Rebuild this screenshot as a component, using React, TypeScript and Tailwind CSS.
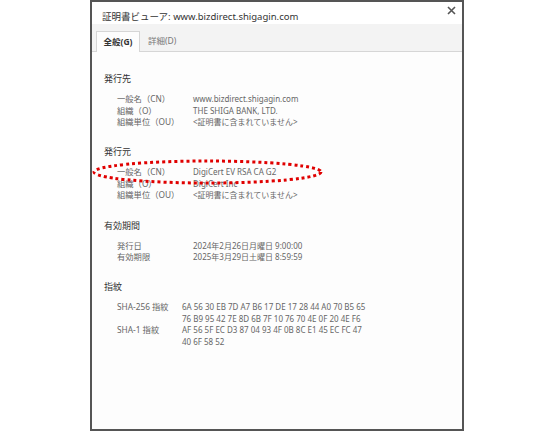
const font = "font-['Noto_Sans','Noto_Sans_CJK_JP',sans-serif]";

type Row = { label: string; value: string[] };

function Section({ title, rows, labelWidth, first }: { title: string; rows: Row[]; labelWidth: string; first?: boolean }) {
  return (
    <section className={first ? "" : "mt-[18.5px]"}>
      <h2 className="text-[9px] leading-[12px] text-[#333]">{title}</h2>
      <div className="mt-[8px] pl-[13px] text-[8px] leading-[11.6px] text-[#666]">
        {rows.map((r) => (
          <div key={r.label} className="flex">
            <div className={`${labelWidth} shrink-0 whitespace-nowrap text-[8.3px]`}>{r.label}</div>
            <div className="whitespace-nowrap">
              {r.value.map((v) => (
                <div key={v}>{v}</div>
              ))}
            </div>
          </div>
        ))}
      </div>
    </section>
  );
}

export default function App() {
  return (
    <div className={`relative h-[431px] w-[554px] bg-white pl-[90px] ${font}`}>
      <div className="relative flex h-[431px] w-[374px] flex-col border-2 border-[#555] bg-[#fdfdfd]">
        {/* title */}
        <div className="flex h-[22px] items-center bg-white pl-[10px] pt-[8px] text-[9.5px] text-[#333]">
          証明書ビューア: www.bizdirect.shigagin.com
        </div>
        <button className="absolute right-[4px] top-[2px] p-[2px]" aria-label="閉じる">
          <svg width="9" height="9" viewBox="0 0 9 9" className="stroke-[#555]">
            <path d="M1 1 8 8M8 1 1 8" strokeWidth="1.6" />
          </svg>
        </button>

        {/* tabs */}
        <div className="flex h-[28px] items-end border-b border-[#d6d6d6] bg-[#f3f3f3] pl-[4px]">
          <div className="-mb-px flex h-[21px] w-[44px] items-center justify-center border border-b-0 border-[#d6d6d6] bg-[#fdfdfd] text-[8.5px] font-bold text-[#333]">
            全般(G)
          </div>
          <div className="flex h-[20px] items-center pl-[8px] text-[8.5px] text-[#777]">詳細(D)</div>
        </div>

        {/* body */}
        <div className="flex-1 pl-[12px] pt-[21px]">
          <Section
            first
            title="発行先"
            labelWidth="w-[76px]"
            rows={[
              { label: "一般名（CN）", value: ["www.bizdirect.shigagin.com"] },
              { label: "組織（O）", value: ["THE SHIGA BANK, LTD."] },
              { label: "組織単位（OU）", value: ["<証明書に含まれていません>"] },
            ]}
          />
          <Section
            title="発行元"
            labelWidth="w-[76px]"
            rows={[
              { label: "一般名（CN）", value: ["DigiCert EV RSA CA G2"] },
              { label: "組織（O）", value: ["DigiCert Inc"] },
              { label: "組織単位（OU）", value: ["<証明書に含まれていません>"] },
            ]}
          />
          <Section
            title="有効期間"
            labelWidth="w-[76px]"
            rows={[
              { label: "発行日", value: ["2024年2月26日月曜日 9:00:00"] },
              { label: "有効期限", value: ["2025年3月29日土曜日 8:59:59"] },
            ]}
          />
          <Section
            title="指紋"
            labelWidth="w-[65px]"
            rows={[
              {
                label: "SHA-256 指紋",
                value: [
                  "6A 56 30 EB 7D A7 B6 17 DE 17 28 44 A0 70 B5 65",
                  "76 B9 95 42 7E 8D 6B 7F 10 76 70 4E 0F 20 4E F6",
                ],
              },
              {
                label: "SHA-1 指紋",
                value: ["AF 56 5F EC D3 87 04 93 4F 0B 8C E1 45 EC FC 47", "40 6F 58 52"],
              },
            ]}
          />
        </div>
      </div>

      {/* red dotted annotation */}
      <svg className="absolute left-[92px] top-[159px]" width="231" height="26" viewBox="0 0 231 26">
        <ellipse cx="115.5" cy="13" rx="113.5" ry="11" fill="none" stroke="#e00000" strokeWidth="3" strokeDasharray="3 3" />
      </svg>
    </div>
  );
}
